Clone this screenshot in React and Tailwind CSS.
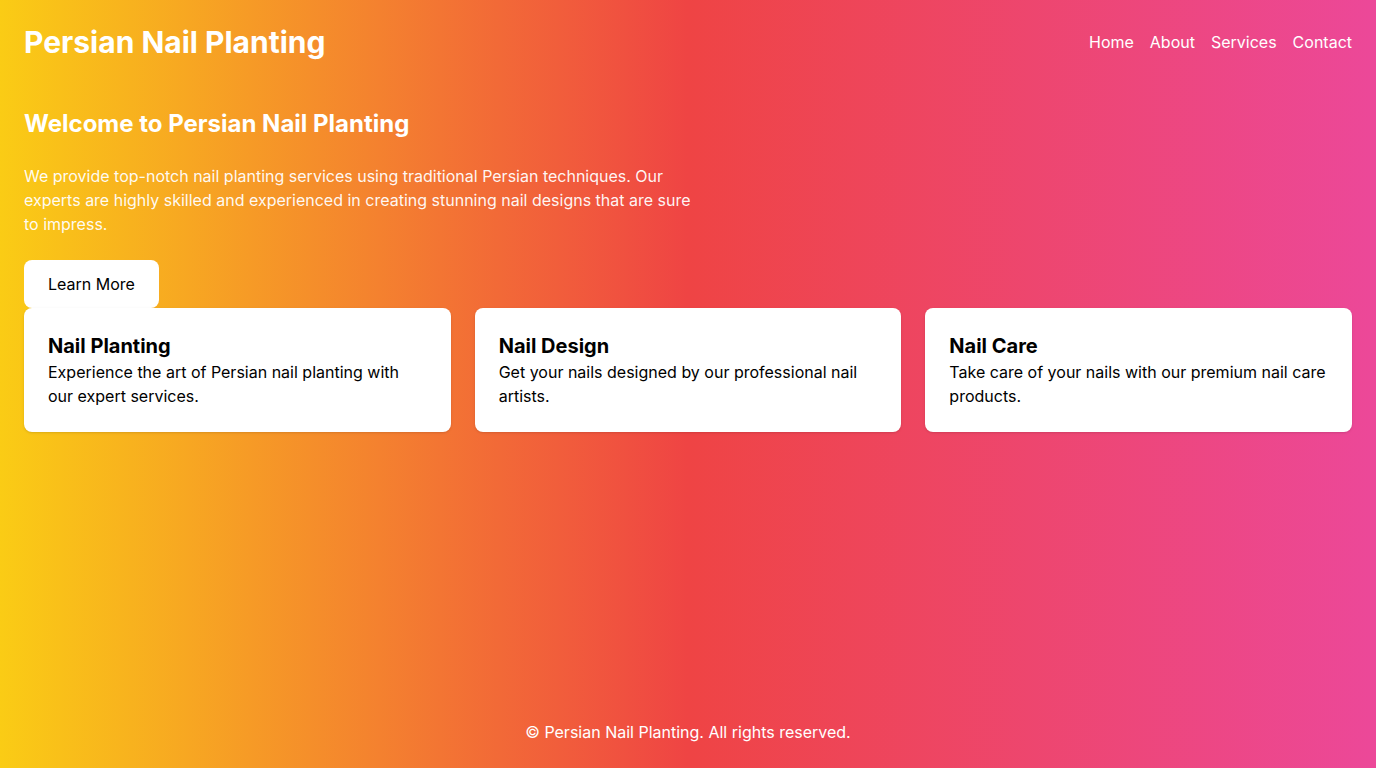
import React from 'react';

const services = [
  { title: 'Nail Planting', text: 'Experience the art of Persian nail planting with our expert services.' },
  { title: 'Nail Design', text: 'Get your nails designed by our professional nail artists.' },
  { title: 'Nail Care', text: 'Take care of your nails with our premium nail care products.' },
];

export default function App() {
  return (
    <div className="min-h-screen flex flex-col bg-[linear-gradient(to_right,#facc15,#ef4444,#ec4899)] font-['Inter',sans-serif] text-white">
      {/* Header */}
      <header className="p-6 flex items-center justify-between">
        <h1 className="text-3xl font-bold">Persian Nail Planting</h1>
        <nav className="flex gap-4 text-base">
          <a href="#">Home</a>
          <a href="#">About</a>
          <a href="#">Services</a>
          <a href="#">Contact</a>
        </nav>
      </header>

      {/* Main */}
      <main className="flex-1 px-6 pt-6">
        <h2 className="text-2xl font-bold mb-6">Welcome to Persian Nail Planting</h2>
        <p className="max-w-2xl mb-6 text-white/95">
          We provide top-notch nail planting services using traditional Persian techniques. Our experts are highly skilled and experienced in creating stunning nail designs that are sure to impress.
        </p>
        <button className="bg-white text-black px-6 py-3 rounded-lg">Learn More</button>
        <div className="grid grid-cols-3 gap-6">
          {services.map((s) => (
            <div key={s.title} className="bg-white text-black rounded-lg p-6 shadow-sm">
              <h3 className="text-xl font-bold">{s.title}</h3>
              <p>{s.text}</p>
            </div>
          ))}
        </div>
      </main>

      {/* Footer */}
      <footer className="p-6 text-center">
        © Persian Nail Planting. All rights reserved.
      </footer>
    </div>
  );
}
